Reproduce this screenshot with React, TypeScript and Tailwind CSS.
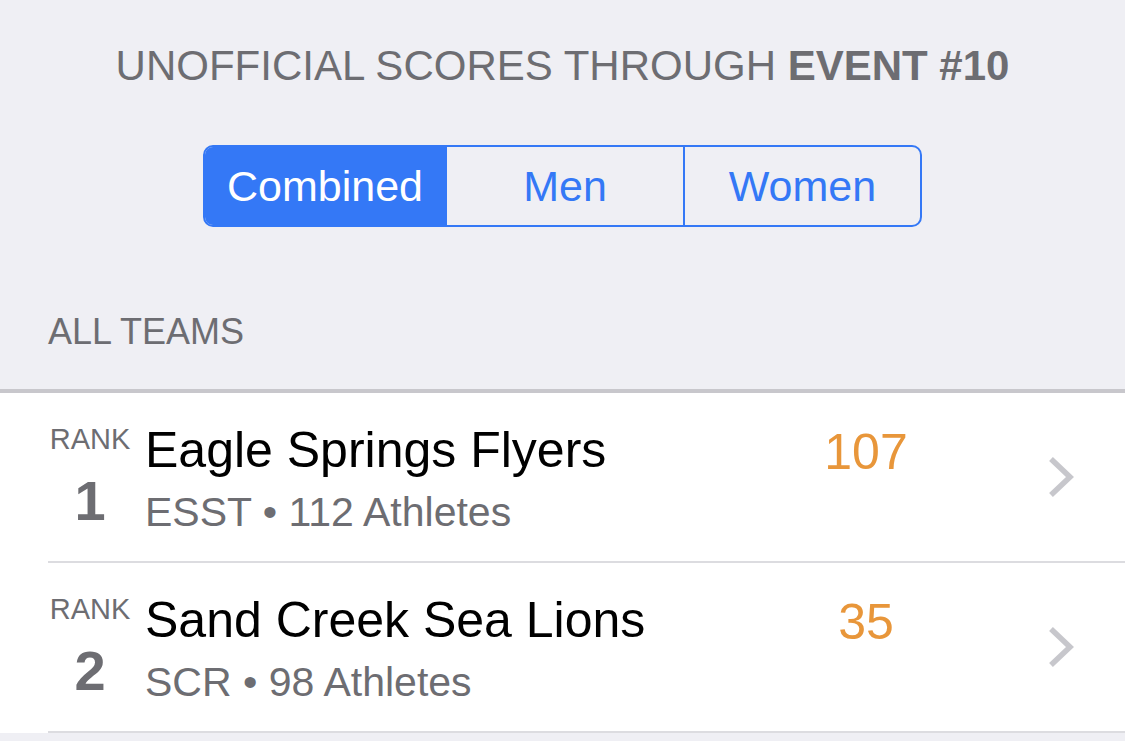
const teams = [
  { rank: 1, name: "Eagle Springs Flyers", code: "ESST", athletes: 112, score: 107 },
  { rank: 2, name: "Sand Creek Sea Lions", code: "SCR", athletes: 98, score: 35 },
]

function Chevron() {
  return (
    <svg width="26" height="42" viewBox="0 0 26 42" className="text-[#c7c7cc]">
      <polyline points="3,3 22,21 3,39" fill="none" stroke="currentColor" strokeWidth="5.5" />
    </svg>
  )
}

export default function App() {
  return (
    <div className="min-h-screen w-[1125px] bg-[#efeff4] font-['Liberation_Sans',Arial,sans-serif] overflow-hidden">
      {/* Header */}
      <div className="pt-[42px] text-center text-[42px] leading-[48px] text-[#6d6d72]">
        UNOFFICIAL SCORES THROUGH <span className="font-bold">EVENT #10</span>
      </div>

      {/* Segmented control */}
      <div className="mt-[55px] flex justify-center">
        <div className="flex h-[82px] w-[719px] rounded-[10px] border-2 border-[#3478f6] overflow-hidden text-[43px] text-[#3478f6]">
          <div className="flex w-[240px] items-center justify-center bg-[#3478f6] text-white">Combined</div>
          <div className="flex w-[238px] items-center justify-center border-l-2 border-[#3478f6]">Men</div>
          <div className="flex flex-1 items-center justify-center border-l-2 border-[#3478f6]">Women</div>
        </div>
      </div>

      {/* Section label */}
      <div className="mt-[85px] pl-[48px] text-[36px] leading-[40px] text-[#6d6d72]">ALL TEAMS</div>

      {/* List */}
      <div className="mt-[37px] border-t-4 border-[#c8c7cc] bg-white">
        {teams.map((t) => (
          <div key={t.rank} className="pl-[48px]">
            <div className="flex h-[168px] items-start pr-[51px]">
              <div className="flex w-[84px] flex-col items-center pt-[31px] text-[#6d6d72]">
                <span className="text-[29px] leading-[30px]">RANK</span>
                <span className="mt-[19px] text-[56px] leading-[56px] font-bold">{t.rank}</span>
              </div>
              <div className="ml-[13px] flex flex-1 flex-col pt-[29px]">
                <span className="text-[50px] leading-[56px] text-black">{t.name}</span>
                <span className="mt-[12px] text-[41px] leading-[44px] text-[#6d6d72]">
                  {t.code} • {t.athletes} Athletes
                </span>
              </div>
              <div className="w-[120px] pt-[31px] text-center text-[50px] leading-[56px] text-[#e8963a]">{t.score}</div>
              <div className="ml-[122px] self-center">
                <Chevron />
              </div>
            </div>
            <div className="h-[2px] bg-[#dcdce0]" />
          </div>
        ))}
      </div>
    </div>
  )
}
